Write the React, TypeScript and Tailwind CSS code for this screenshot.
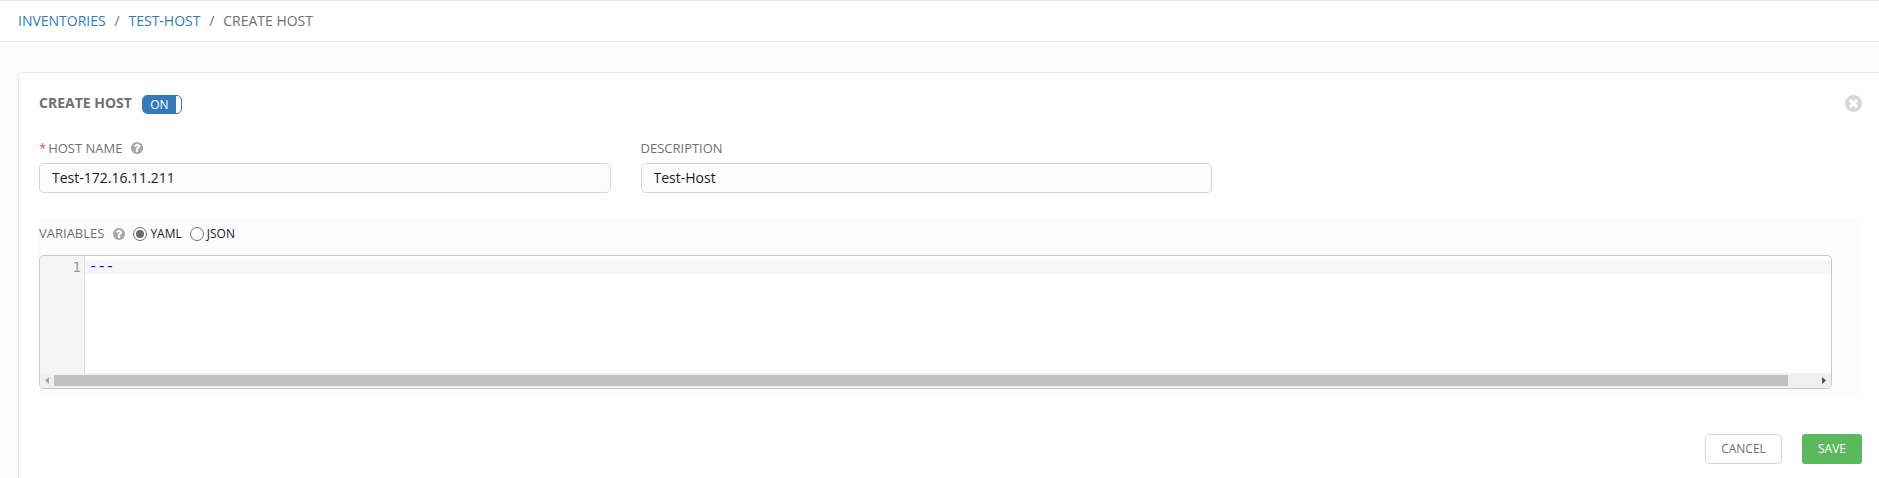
import React, { useState } from "react";

const DISC =
  "M1664 896q0 209-103 385.5t-279.5 279.5-385.5 103-385.5-103-279.5-279.5-103-385.5 103-385.5 279.5-279.5 385.5-103 385.5 103 279.5 279.5 103 385.5z";

function HelpIcon({ className = "" }: { className?: string }) {
  return (
    <svg viewBox="128 128 1536 1536" className={`size-3 shrink-0 ${className}`} aria-hidden="true">
      <path d={DISC} className="fill-[#a6a6a6]" />
      <path
        className="fill-white stroke-white"
        strokeWidth="50"
        d="M1024 1376v-192q0-14-9-23t-23-9h-192q-14 0-23 9t-9 23v192q0 14 9 23t23 9h192q14 0 23-9t9-23zm256-672q0-88-55.5-163t-138.5-116-170-41q-243 0-371 213-15 24 8 42l132 100q7 6 19 6 16 0 25-12 53-68 86-92 34-24 86-24 48 0 85.5 26t37.5 59q0 38-20 61t-68 45q-63 28-115.5 86.5t-52.5 125.5v36q0 14 9 23t23 9h192q14 0 23-9t9-23q0-19 21.5-49.5t54.5-49.5q32-18 49-28.5t46-35 44.5-48 28-60.5 12.5-81z"
      />
    </svg>
  );
}

function CloseIcon() {
  return (
    <svg viewBox="128 128 1536 1536" className="size-[17px]" aria-hidden="true">
      <path d={DISC} className="fill-[#d7d7d7]" />
      <path
        className="fill-white stroke-white"
        strokeWidth="40"
        d="M1277 1122q0-26-19-45l-181-181 181-181q19-19 19-45 0-27-19-46l-90-90q-19-19-46-19-26 0-45 19l-181 181-181-181q-19-19-45-19-27 0-46 19l-90 90q-19 19-19 46 0 26 19 45l181 181-181 181q-19 19-19 45 0 27 19 46l90 90q19 19 46 19 26 0 45-19l181-181 181 181q19 19 45 19 27 0 46-19l90-90q19-19 19-46z"
      />
    </svg>
  );
}

function Field({ label, value, required }: { label: string; value: string; required?: boolean }) {
  const [text, setText] = useState(value);
  return (
    <label className="flex w-[571.5px] flex-col">
      <span className="flex h-5 items-center text-[13px] leading-5 text-[#707070]">
        {required && <span className="mr-[2px] text-[#d9534f]">*</span>}
        {label}
        {required && <HelpIcon className="ml-[9px]" />}
      </span>
      <input
        value={text}
        onChange={(e) => setText(e.target.value)}
        className="mt-[5px] h-[30px] rounded-[5px] border border-[#d7d7d7] bg-[#fcfcfc] px-3 pb-[2px] text-sm text-[#161b1f] outline-none"
      />
    </label>
  );
}

function Radio({ label, checked, onSelect }: { label: string; checked: boolean; onSelect: () => void }) {
  return (
    <button type="button" role="radio" aria-checked={checked} onClick={onSelect} className="flex items-center gap-[3px] text-xs text-[#161b1f]">
      <span className="flex size-[14px] items-center justify-center rounded-full border border-[#707070] bg-white">
        {checked && <span className="size-2 rounded-full bg-[#6a6a6a]" />}
      </span>
      {label}
    </button>
  );
}

function Editor() {
  return (
    <div className="flex h-[134px] w-[1793px] flex-col overflow-hidden rounded-[5px] border border-[#c8c8c8] bg-white font-['DejaVu_Sans_Mono',monospace] text-sm leading-[14px]">
      <div className="flex flex-1">
        <div className="w-[45px] border-r border-[#dddddd] bg-[#f5f5f5] pt-1 pr-[3px] text-right text-[#999999]">1</div>
        <div className="flex-1 pt-1">
          <div className="h-[14px] bg-[#f6f6f6] pl-1 font-['Liberation_Mono',monospace] text-[#0000ff]">---</div>
        </div>
      </div>
      <div className="flex h-[15px] items-center bg-[#f0f0f0] pr-[5px] pl-[5px]">
        <svg viewBox="0 0 4 7" className="h-[7px] w-1 fill-[#a3a3a3]"><path d="M4 0v7L0 3.5z" /></svg>
        <div className="ml-[5px] h-[11px] w-[1734px] bg-[#c1c1c1]" />
        <svg viewBox="0 0 4 7" className="ml-auto h-[7px] w-1 fill-[#505050]"><path d="M0 0v7L4 3.5z" /></svg>
      </div>
    </div>
  );
}

export default function App() {
  const [format, setFormat] = useState("YAML");
  return (
    <div className="flex h-[478px] flex-col overflow-hidden bg-[#fcfcfc] font-['Open_Sans','Noto_Sans',sans-serif] text-[#707070]">
      <nav className="flex h-[42px] shrink-0 items-center border-y border-[#e8e8e8] bg-white pl-[18px] text-sm">
        <a className="text-[#337ab7]">INVENTORIES</a>
        <span className="mx-[8.8px]">/</span>
        <a className="text-[#337ab7]">TEST-HOST</a>
        <span className="mx-[8.8px]">/</span>
        <span>CREATE HOST</span>
      </nav>
      <main className="mt-[30px] ml-[18px] flex flex-1 flex-col rounded-tl-[5px] border-t border-l border-[#e8e8e8] bg-white pr-[17px] pl-5">
        <header className="mt-[19px] flex h-[22px] items-center">
          <h1 className="text-sm font-bold">CREATE HOST</h1>
          <button type="button" className="mt-[3px] ml-[10px] flex h-[19px] w-10 overflow-hidden rounded-[5px] border border-[#337ab7] bg-white text-xs leading-[18px] text-white">
            <span className="h-full w-[33px] bg-[#337ab7] text-center">ON</span>
          </button>
          <button type="button" aria-label="Close" className="ml-auto">
            <CloseIcon />
          </button>
        </header>
        <div className="mt-6 flex gap-[30px]">
          <Field label="HOST NAME" value="Test-172.16.11.211" required />
          <Field label="DESCRIPTION" value="Test-Host" />
        </div>
        <section className="mt-[25px] h-[176px] rounded-[5px] bg-[#fcfcfc]">
          <div className="flex h-[37px] items-center pb-[5px]">
            <span className="text-[13px]">VARIABLES</span>
            <HelpIcon className="ml-[9px]" />
            <div role="radiogroup" className="ml-2 flex gap-2">
              <Radio label="YAML" checked={format === "YAML"} onSelect={() => setFormat("YAML")} />
              <Radio label="JSON" checked={format === "JSON"} onSelect={() => setFormat("JSON")} />
            </div>
          </div>
          <Editor />
        </section>
        <footer className="mt-10 flex justify-end gap-5 text-xs">
          <button type="button" className="h-[30px] w-[77px] rounded-[5px] border border-[#d7d7d7] bg-white">CANCEL</button>
          <button type="button" className="h-[30px] w-[60px] rounded-[3px] bg-[#5cb85c] text-white">SAVE</button>
        </footer>
      </main>
    </div>
  );
}
